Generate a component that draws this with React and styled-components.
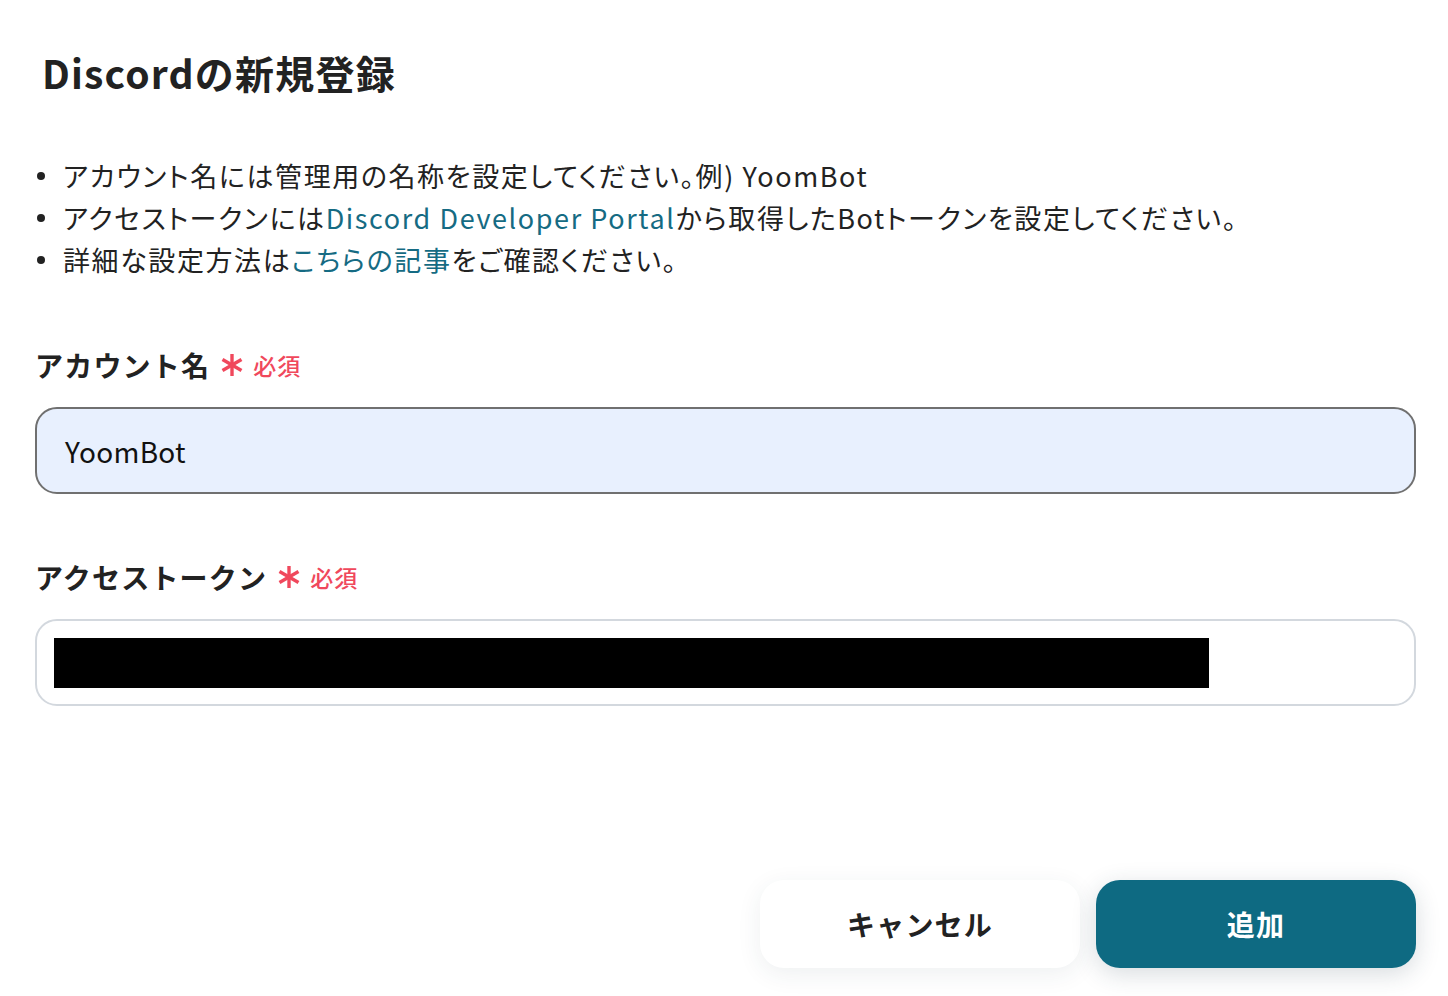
import React from "react";
import styled, { createGlobalStyle } from "styled-components";

const Global = createGlobalStyle`
  html, body { margin: 0; padding: 0; background: #ffffff; }
  body { font-family: "Noto Sans CJK JP", "Noto Sans", sans-serif; color: #222222; }
`;

const Page = styled.div`
  width: 1448px;
  height: 996px;
  box-sizing: border-box;
  padding: 0 32px 0 35px;
  display: flex;
  flex-direction: column;
`;

const Title = styled.h1`
  margin: 45px 0 0 7px;
  font-size: 39px;
  line-height: 54px;
  font-weight: 700;
  color: #222222;
  letter-spacing: 1.2px;
`;

const Notes = styled.ul`
  margin: 56px 0 0 0;
  padding: 0;
  list-style: none;
  display: flex;
  flex-direction: column;
`;

const Note = styled.li`
  display: flex;
  align-items: center;
  font-size: 27px;
  line-height: 42px;
  color: #222222;
  letter-spacing: 1.6px;
  font-feature-settings: "palt";
  &::before {
    content: "";
    width: 8px;
    height: 8px;
    border-radius: 50%;
    background: #222222;
    margin: 0 18px 0 2px;
    flex: none;
  }
`;

const Link = styled.a`
  color: #156b83;
  text-decoration: none;
`;

const Field = styled.div`
  display: flex;
  flex-direction: column;
  margin-top: ${(p) => p.$top}px;
`;

const Label = styled.div`
  display: flex;
  align-items: center;
  font-size: 28px;
  line-height: 40px;
  font-weight: 700;
  color: #222222;
  letter-spacing: 1.2px;
`;

const Required = styled.span`
  display: inline-flex;
  align-items: center;
  margin-left: 10px;
  gap: 9px;
  color: #f0485c;
  font-size: 23px;
  font-weight: 500;
  letter-spacing: 1px;
`;

const Input = styled.div`
  margin-top: ${(p) => p.$gap}px;
  height: 87px;
  box-sizing: border-box;
  border-radius: 22px;
  border: 2px solid ${(p) => (p.$filled ? "#707070" : "#d3d8de")};
  background: ${(p) => (p.$filled ? "#e8f0fe" : "#ffffff")};
  display: flex;
  align-items: center;
  padding: 0 ${(p) => (p.$filled ? 28 : 17)}px;
  font-size: 28px;
  color: #111111;
  letter-spacing: 0.3px;
`;

const Redacted = styled.div`
  width: 1155px;
  height: 50px;
  background: #000000;
`;

const Footer = styled.div`
  margin-top: auto;
  margin-bottom: 28px;
  display: flex;
  justify-content: flex-end;
  gap: 16px;
`;

const Button = styled.button`
  width: 320px;
  height: 88px;
  border: none;
  border-radius: 24px;
  font-family: inherit;
  font-size: 28px;
  font-weight: 700;
  letter-spacing: 1.2px;
  cursor: pointer;
  background: ${(p) => (p.$primary ? "#0e6a82" : "#ffffff")};
  color: ${(p) => (p.$primary ? "#ffffff" : "#222222")};
  box-shadow: 0 6px 24px rgba(40, 60, 80, ${(p) => (p.$primary ? 0.18 : 0.08)});
`;

const Star = () => (
  <svg width="24" height="24" viewBox="0 0 24 24" aria-hidden="true">
    <g stroke="#f0485c" strokeWidth="3.4" strokeLinecap="butt">
      <line x1="12" y1="1" x2="12" y2="23" />
      <line x1="2.5" y1="6.5" x2="21.5" y2="17.5" />
      <line x1="2.5" y1="17.5" x2="21.5" y2="6.5" />
    </g>
  </svg>
);

export default function App() {
  return (
    <>
      <Global />
      <Page>
        <Title>Discordの新規登録</Title>
        <Notes>
          <Note>アカウント名には管理用の名称を設定してください。例) YoomBot</Note>
          <Note>
            アクセストークンには<Link href="#">Discord Developer Portal</Link>から取得したBotトークンを設定してください。
          </Note>
          <Note>
            詳細な設定方法は<Link href="#">こちらの記事</Link>をご確認ください。
          </Note>
        </Notes>
        <Field $top={64}>
          <Label>
            アカウント名
            <Required>
              <Star />
              必須
            </Required>
          </Label>
          <Input $gap={22} $filled>YoomBot</Input>
        </Field>
        <Field $top={63}>
          <Label>
            アクセストークン
            <Required>
              <Star />
              必須
            </Required>
          </Label>
          <Input $gap={22}>
            <Redacted />
          </Input>
        </Field>
        <Footer>
          <Button>キャンセル</Button>
          <Button $primary>追加</Button>
        </Footer>
      </Page>
    </>
  );
}
